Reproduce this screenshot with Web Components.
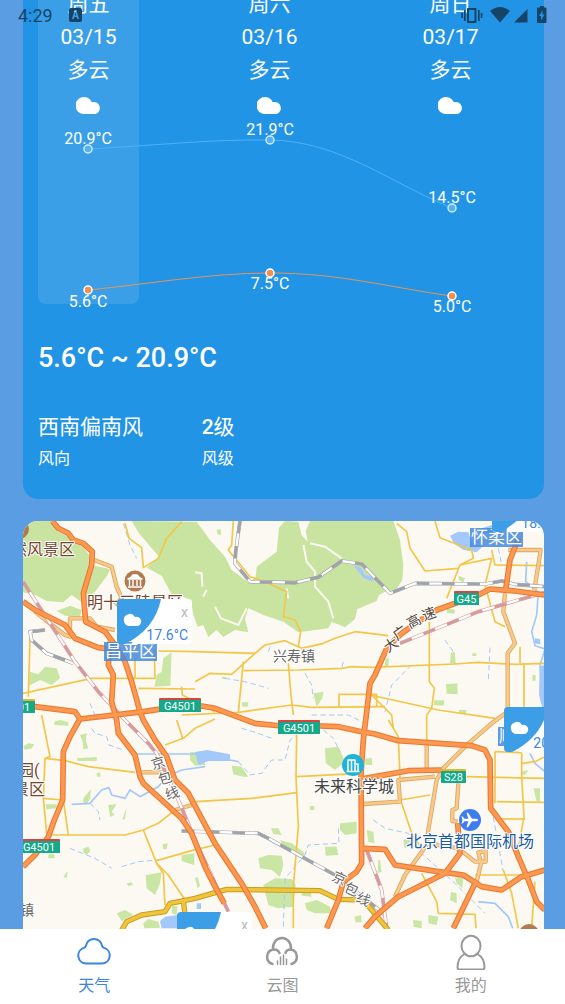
<!DOCTYPE html>
<html lang="zh-CN">
<head>
<meta charset="utf-8">
<meta name="viewport" content="width=device-width, initial-scale=1">
<title>天气</title>
<style>
    html, body {
        margin: 0;
        height: 100%;
    }

    body {
        font-family: Roboto, "Noto Sans CJK SC", sans-serif;
        color: #fff;
        overflow: hidden;
    }
</style>
</head>
<body>
<weather-app></weather-app>

<template id="tpl-app">
<style>
    :host {
        display: flex;
        flex-direction: column;
        height: 100vh;
        background: #5a9de3;
    }

    main {
        flex: 1;
        min-height: 0;
        display: flex;
        flex-direction: column;
        gap: 22px;
        padding: 0 21px 0 23px;
        overflow: hidden;
    }

    /* the page is scrolled part way down the forecast */
    forecast-card {
        margin-top: -27px;
    }
</style>
<status-bar></status-bar>
<main>
    <forecast-card></forecast-card>
    <weather-map>
        <map-place x="447" y="7">怀柔区</map-place>
        <map-place x="81" y="121">昌平区</map-place>
        <map-place x="475" y="206">顺义区</map-place>
        <weather-pin x="469" y="-34">18.2°C</weather-pin>
        <weather-pin x="94" y="78">17.6°C</weather-pin>
        <weather-pin x="481" y="186">20.1°C</weather-pin>
        <weather-pin x="154" y="391">19.5°C</weather-pin>
    </weather-map>
</main>
<tab-bar></tab-bar>
</template>

<template id="tpl-status">
<style>
    :host {
        position: absolute;
        inset: 0 0 auto 0;
        display: flex;
        align-items: center;
        height: 30px;
        padding: 0 18px;
        color: #164468;
        font-size: 18px;
        z-index: 2;
    }

    .badge { margin-left: 16px; }
    .icons { margin-left: auto; }
    svg { display: block; fill: currentColor; }
</style>
<span>4:29</span>
<svg class="badge" width="13" height="14" viewBox="0 0 13 14" aria-hidden="true">
    <path fill-rule="evenodd" d="M2 0h9a2 2 0 0 1 2 2v10a2 2 0 0 1-2 2H2a2 2 0 0 1-2-2V2a2 2 0 0 1 2-2zM5.500 2.500 3 11h1.700l.5-2h2.600l.5 2H10L7.500 2.500zM5.600 7.500l.9-3.200.9 3.200z"/>
</svg>
<svg class="icons" width="86" height="18" viewBox="461 6 86 18" aria-hidden="true">
    <path fill-rule="evenodd" d="M468 8h7.500a1 1 0 0 1 1 1v13a1 1 0 0 1-1 1H468a1 1 0 0 1-1-1V9a1 1 0 0 1 1-1zm1 2v11h5.500V10z"/>
    <path d="M464 10h1.700v11H464zM461.300 13h1.700v5h-1.700zM478 10h1.700v11H478zM480.700 13h1.700v5h-1.700z"/>
    <path d="M490 11q10-8 20 0L500 22.500z"/>
    <path d="M514 22.500 527.500 9v13.500z"/>
    <path fill-rule="evenodd" d="M540 6h4v1.500h1.500a1 1 0 0 1 1 1V22a1 1 0 0 1-1 1h-7.500a1 1 0 0 1-1-1V8.500a1 1 0 0 1 1-1h2zm2.500 4.500-3.500 5.500h2v4.500l3.500-6h-2z"/>
</svg>
</template>

<template id="tpl-forecast">
<style>
    :host {
        display: block;
        padding: 15px 15px 24px;
        border-radius: 0 0 15px 15px;
        background: #2294e5;
    }

    .days {
        display: flex;
        justify-content: space-between;
        margin-right: 28px;
    }

    forecast-day {
        width: 101px;
    }

    .week {
        display: grid;
    }

    /* the columns and the chart share one cell, so the chart runs over them */
    .days, .chart {
        grid-area: 1 / 1;
    }

    .chart {
        align-self: end;
        margin-right: 28px;
    }

    h2 {
        margin: 38px 0 37px;
        font-size: 27px;
        line-height: 32px;
        font-weight: 500;
    }

    dl {
        display: grid;
        grid-template-columns: repeat(3, 1fr);
        margin: 0;
    }

    dl div {
        display: flex;
        flex-direction: column-reverse;
    }

    dt {
        font-size: 16px;
        line-height: 32px;
    }

    dd {
        margin: 0;
        font-size: 21px;
        line-height: 32px;
    }

    b {
        font-weight: 500;
    }
</style>
<section class="week">
    <div class="days">
        <forecast-day active day="周五" date="03/15">多云</forecast-day>
        <forecast-day day="周六" date="03/16">多云</forecast-day>
        <forecast-day day="周日" date="03/17">多云</forecast-day>
    </div>
    <temp-chart class="chart"></temp-chart>
</section>
<h2>5.6°C ~ 20.9°C</h2>
<dl>
    <div><dt>风向</dt><dd>西南偏南风</dd></div>
    <div><dt>风级</dt><dd><b>2</b>级</dd></div>
</dl>
</template>

<template id="tpl-day">
<style>
    :host {
        display: flex;
        flex-direction: column;
        align-items: center;
        padding-bottom: 190px;
        border-radius: 8px;
        font-size: 21px;
        line-height: 33px;
    }

    :host([active]) {
        background: rgba(255, 255, 255, 0.11);
    }

    svg {
        margin-top: 10px;
    }
</style>
<span class="day"></span>
<time></time>
<slot></slot>
<svg width="26" height="17" viewBox="0 0 26 17" fill="#fff" aria-hidden="true">
    <path d="M8.500 17A8.500 8.500 0 1 1 15.800 5.200 6.100 6.100 0 1 1 19.500 17z"/>
</svg>
</template>

<template id="tpl-chart">
<style>
    :host {
        display: block;
    }

    svg {
        display: block;
        width: 100%;
        overflow: visible;
    }

    text {
        font-size: 16px;
        fill: #fff;
        text-anchor: middle;
    }
</style>
<svg viewBox="0 0 463 190">
    <path d="M50 35C111 32 172 25 232 26C302 27 354 70 414 94" fill="none" stroke="#4db1fa"/>
    <path d="M50 176C111 170 172 159 232 159C302 159 354 174 414 182" fill="none" stroke="#e3965c"/>
    <g id="points"></g>
</svg>
</template>

<template id="tpl-map">
<style>
    :host {
        display: block;
        position: relative;
        flex: 1;
        min-height: 0;
        overflow: hidden;
        border-radius: 15px 15px 0 0;
        background: #fcf9f2;
    }

    svg {
        display: block;
        width: 100%;
        height: 100%;
    }

    path {
        fill: none;
        stroke-linejoin: round;
    }

    .label {
        paint-order: stroke;
        stroke: #fff;
        stroke-width: 2px;
        stroke-linejoin: round;
        font-size: 16px;
    }

    .small { font-size: 14px; }
    .scenic { fill: #75452d; }
    .town { fill: #696969; }
    .city { fill: #444; }
    .airport { fill: #175aa8; }
    .road { fill: #4f4438; }

    .shield text {
        fill: #fff;
        font-size: 11px;
        text-anchor: middle;
    }
</style>
<svg viewBox="23 521 521 408" preserveAspectRatio="xMinYMin slice">
    <g id="ground" transform="translate(15 515) scale(0.333333)"></g>
    <g id="shields"></g>
    <g id="icons">
        <circle cx="19" cy="529" r="10" fill="#b17a50"/>
        <circle cx="135" cy="581" r="10.500" fill="#b17a50"/>
        <path d="M128 579q3-1 5-4h4q2 3 5 4zM129.500 580v6M133 580v6M137 580v6M140.500 580v6M128 587h14" style="fill:#fff;stroke:#fff;stroke-width:1.400"/>
        <circle cx="353" cy="765" r="11" fill="#1fb3da"/>
        <path d="M348 771v-11h7v11M351.500 771v-11M358 771v-7h-2M346.500 771.500h13" style="stroke:#fff;stroke-width:1.500"/>
        <circle cx="470" cy="820" r="11" fill="#3d7df0"/>
        <path d="M478 820q0-1.300-2-1.300h-4l-4-6h-1.600l2 6h-4l-1.700-2.200h-1.200l1 3.500-1 3.500h1.200l1.700-2.200h4l-2 6h1.600l4-6h4q2 0 2-1.300z" style="fill:#fff"/>
        <circle cx="529" cy="934" r="10" fill="#b17a50"/>
    </g>
    <text class="label scenic" x="11" y="555">然风景区</text>
    <text class="label scenic" x="87" y="608">明十三陵景区</text>
    <text class="label scenic" x="18" y="776">园(</text>
    <text class="label scenic" x="13" y="795">景区</text>
    <text class="label town small" x="20" y="915">镇</text>
    <text class="label town small" x="273" y="661">兴寿镇</text>
    <text class="label city" x="314" y="792">未来科学城</text>
    <text class="label airport" x="406" y="847">北京首都国际机场</text>
    <text class="label road small" x="388 397 410 424" y="653 641 629 621" rotate="-35 -35 -28 -20">大广高速</text>
    <text class="label town small" x="153 160 167" y="770 785 800" rotate="-18">京包线</text>
    <text class="label town small" x="331 343 355" y="880 891 901" rotate="24">京包线</text>
</svg>
<slot></slot>
</template>

<template id="tpl-place">
<style>
    :host {
        position: absolute;
        padding: 0 1px;
        font-size: 17px;
        line-height: 19px;
        white-space: nowrap;
        background: rgba(68, 137, 220, 0.85);
    }
</style>
<slot></slot>
</template>

<template id="tpl-pin">
<style>
    :host {
        position: absolute;
        box-sizing: border-box;
        display: flex;
        flex-direction: column;
        align-items: flex-end;
        justify-content: space-between;
        width: 75px;
        height: 45px;
        padding: 4px 4px 0 0;
        border-radius: 4px;
        overflow: hidden;
        color: #3c86e0;
        background: linear-gradient(#fff, #fff) right / 60px 100% no-repeat;
        font-size: 14px;
        line-height: 18px;
    }

    svg {
        position: absolute;
        left: 0;
        top: 0;
    }

    button {
        padding: 0;
        border: 0;
        background: none;
        color: #b5b9be;
        font: 14px/18px Roboto, sans-serif;
    }

    span {
        position: relative;
    }
</style>
<svg width="44" height="45" viewBox="0 0 44 45" aria-hidden="true">
    <path fill="#3b9ee6" d="M0 0h44Q38 30 8 45H0z"/>
    <path fill="#fff" d="M13 27a6 6 0 1 1 5-9 4.600 4.600 0 1 1 3 9z"/>
</svg>
<button type="button" aria-label="关闭">x</button>
<span><slot></slot></span>
</template>

<template id="tpl-tabs">
<style>
    :host {
        display: block;
        background: #fff;
    }

    nav {
        display: flex;
    }

    button {
        flex: 1;
        display: flex;
        flex-direction: column;
        align-items: center;
        gap: 4px;
        height: 75px;
        padding: 5px 0 0;
        border: 0;
        background: none;
        color: #999;
        font: 16px/24px Roboto, "Noto Sans CJK SC", sans-serif;
    }

    button[aria-current] {
        color: #3a86e4;
    }

    svg {
        fill: none;
        stroke: currentColor;
        stroke-width: 2;
        stroke-linecap: round;
        stroke-linejoin: round;
    }
</style>
<nav>
    <button type="button" aria-current="page">
        <svg width="36" height="36" viewBox="0 0 36 36"><path d="M10 29.500a8 8 0 0 1-2.200-15.600c.9-.3 1.700-.8 2-2C11 7.300 14.200 5 18 5s7 2.300 8.200 6.900c.3 1.200 1.100 1.700 2 2A8 8 0 0 1 26 29.500z"/></svg>
        天气
    </button>
    <button type="button">
        <svg width="36" height="36" viewBox="0 0 36 36"><path stroke-width="2.500" d="M8.500 30A7.500 7.500 0 0 1 9 15.500c3-.3 5.500 1 6.500 3.500M9 15.500C8.500 9 12.500 4 18 4s9.500 5 9 11.500M21.500 19c.5-2.500 2.500-3.500 5.500-3.500A7.500 7.500 0 0 1 27.500 30"/><path stroke-width="1.500" d="M13.500 30.500V27M16.500 30.500V23M19.500 30.500V21M22.500 30.500V25"/></svg>
        云图
    </button>
    <button type="button">
        <svg width="36" height="36" viewBox="0 0 36 36"><ellipse cx="18" cy="12" rx="9.500" ry="10.300"/><path d="M11.500 20C7 22.500 4.500 27 4.500 33.500q0 2 2 2h23q2 0 2-2C31.500 27 29 22.500 24.500 20"/></svg>
        我的
    </button>
</nav>
</template>

<script>
const SVG = "http://www.w3.org/2000/svg";

function attach(host, id) {
    const root = host.attachShadow({ mode: "open" });
    root.appendChild(document.getElementById(id).content.cloneNode(true));
    return root;
}

function draw(parent, name, attrs, text) {
    const node = document.createElementNS(SVG, name);
    for (const key in attrs) node.setAttribute(key, attrs[key]);
    if (text) node.textContent = text;
    parent.appendChild(node);
    return node;
}

// Map geometry, three units to a pixel. Each string is one shape.
const forests = [
    "24,18 108,18 125,48 155,62 172,82 205,95 222,120 228,150 285,162 278,180 240,230 200,262 170,240 145,262 95,258 60,240 24,232",
    "125,288 165,272 200,285 195,305 150,302",
    "350,18 372,55 402,90 432,125 395,158 440,182 452,205 470,238 505,245 528,256 535,300 548,335 565,330 580,366 605,345 625,366 660,345 700,352 690,312 700,280 725,290 745,300 805,320 850,352 940,340 950,320 990,337 1020,312 1027,282 1085,258 1092,240 1120,225 1135,238 1162,195 1165,150 1155,75 1135,18 885,18 872,48 878,80 860,60 850,20 810,18 792,38 785,110 725,155 722,188 700,202 650,165 630,125 585,75 545,20",
    "605,45 617,42 618,60 608,58",
];

const parks = [
    "45,470 70,478 90,455 125,460 135,490 110,510 75,495 42,512", "445,430 470,412 466,512 418,515 425,480 440,470",
    "895,535 925,530 922,550 905,575", "680,562 700,562 698,575 682,575", "620,485 634,485 632,492 622,492",
    "1308,412 1320,412 1322,448 1305,445", "1293,507 1327,505 1328,538 1295,536", "1258,556 1288,556 1286,572 1256,570",
    "1372,415 1385,415 1384,423 1372,423", "1330,182 1350,190 1345,202 1332,196", "1296,278 1320,285 1318,296 1296,294",
    "1552,480 1562,480 1562,497 1552,497", "1112,430 1122,430 1120,455 1108,455", "1330,585 1355,585 1352,595 1335,595",
    "118,620 135,615 160,622 160,632 118,630", "25,695 40,685 58,688 50,700 30,705", "195,660 215,655 212,675 220,700 205,703 203,680",
    "185,730 245,726 245,738 188,738", "245,775 256,772 256,785 246,785", "92,868 125,868 125,880 95,883",
    "205,850 228,822 225,850 215,870 205,862", "280,870 305,868 290,890 300,900 285,905", "335,875 330,912 322,915 330,890",
    "205,1000 220,995 226,1008 215,1020 205,1012", "392,1080 440,1072 435,1105 420,1140 395,1120", "500,1020 538,1015 538,1050 520,1045 500,1038",
    "100,1018 118,1018 118,1030 100,1030", "443,988 458,985 455,1002 445,1003", "145,1087 155,1070 158,1072 155,1088",
    "335,1105 350,1102 354,1110 340,1113", "305,1195 330,1185 355,1200 320,1218", "385,1225 400,1212 430,1220 435,1238 388,1240",
    "540,1090 548,1085 555,1112 548,1120", "525,712 568,708 570,750 540,752 525,735",
    "730,1030 760,1020 800,1022 805,1050 795,1085 770,1065 735,1060", "745,1110 780,1090 830,1092 842,1110 835,1175 790,1180 760,1170",
    "650,752 680,755 700,785 685,785 655,778", "768,940 790,940 800,960 775,957", "795,975 830,985 870,1015 860,1025 810,1000",
    "975,925 1025,920 1025,955 990,960 975,945", "930,995 965,995 970,1020 932,1022", "885,873 898,873 898,885 885,885",
    "860,1128 885,1120 890,1145 860,1142", "870,1165 905,1155 945,1175 950,1195 900,1195 875,1185", "930,700 970,695 990,740 960,765 932,745",
    "1050,732 1070,728 1072,750 1052,750", "1055,945 1075,950 1078,985 1060,980", "1018,1205 1038,1200 1040,1222 1022,1222",
    "1165,975 1190,965 1192,990 1168,1000", "1320,1088 1345,1085 1342,1120 1325,1105", "1308,1130 1325,1135 1325,1165 1305,1155",
    "1240,1200 1270,1205 1265,1230 1240,1225", "1195,1215 1220,1218 1220,1240 1195,1235", "1555,820 1575,820 1575,860 1565,860",
    "470,1170 488,1175 485,1200 470,1195", "1090,1035 1095,1035 1100,1070 1088,1075", "1520,770 1540,765 1532,778 1522,780",
];

const lakes = [
    "1305,62 1330,50 1360,52 1372,85 1402,95 1385,112 1345,104 1318,86", "1015,150 1040,160 1050,180 1075,185 1072,200 1045,188",
    "1400,40 1430,30 1440,50 1400,56",
    "540,712 575,705 645,718 645,738 580,738 550,750", "435,1218 450,1205 488,1200 488,1240 440,1240",
    "545,1165 558,1165 558,1182 545,1182", "1560,370 1575,372 1576,388 1558,385", "1574,455 1588,450 1588,600 1572,540",
];

const rivers = [
    "1535,140 1532,200 1570,232 1565,300 1550,350 1560,392 1590,402 1575,450 1585,570",
    "365,717 570,717", "170,868 225,865 260,825 282,818 290,840 330,850 345,825 375,845 430,815 455,785 500,765 570,755",
    "1545,715 1560,745 1590,770", "1390,1160 1440,1165 1480,1205 1493,1240", "645,735 670,740",
];

// streams that only show in places
const streams = [
    "225,865 250,890 255,915", "230,640 240,655 275,665 282,690 325,705",
    "670,740 705,780 740,775 770,735 810,735 825,675 845,660", "1075,915 1110,940 1180,955 1220,1015 1320,1105 1410,1195",
    "870,475 890,510 895,550", "925,645 955,670 975,710", "970,940 972,985 880,990 870,1020 810,1090 805,1235",
    "765,395 760,412", "1450,100 1460,150", "1425,398 1420,495", "325,25 345,90 365,130", "165,1000 240,1030 290,1060",
    "320,1055 370,1040 430,1035", "1190,450 1130,510 1110,590", "680,640 730,655 770,670", "1290,375 1315,410", "225,565 240,600",
    "1430,880 1450,990 1465,1070", "630,490 690,500 760,520", "890,600 1000,600 1050,625", "985,440 980,460",
];

const creeks = [
    "885,85 930,95 980,130", "865,90 875,140 900,170 900,215 940,260 955,310", "540,172 560,175 562,215", "600,275 618,310 670,330 695,280",
    "815,220 820,250", "575,225 565,245",
];

const lanes = [
    "655,18 650,90 640,105 660,130 705,185 750,200 815,230 805,305 840,315 857,350 850,395",
    "330,25 342,70 380,98 385,158 430,130 455,70 500,20",
    "540,500 585,475 650,478 720,415 750,390 810,377 860,400 925,385 960,370 1020,350 1120,362",
    "430,408 540,410 720,415", "685,467 850,465 980,460 1010,455 1070,457 1320,447 1390,442 1500,448 1590,445",
    "685,440 670,592", "820,445 828,540 835,600", "845,660 843,785 850,935 835,1115 835,1240",
    "500,600 670,592 830,570 890,577 1110,575", "972,575 972,538 1085,538 1085,575", "1065,540 1120,552 1270,585 1440,610",
    "45,370 40,545", "24,535 230,490 420,490 418,405", "360,430 360,490", "370,520 540,522", "500,515 502,540 600,590",
    "1145,25 1175,50 1185,100 1230,168 1330,160", "1260,18 1275,68 1370,105 1375,130 1335,150 1295,250",
    "1335,150 1430,130 1410,210 1440,320 1470,335", "1243,320 1243,500 1258,520 1250,580 1235,600 1235,690",
    "1515,395 1515,445", "1527,445 1527,590", "1430,105 1440,150 1590,152", "80,600 105,725 90,730 85,850 95,955",
    "90,730 150,737 220,755 360,772", "85,850 145,855 160,960", "100,960 330,960 385,945 430,925 480,885",
    "540,860 710,850 845,833", "385,945 405,995 425,1045 445,1075 450,1170", "425,1045 460,1080 510,1155",
    "425,1037 530,1007 600,990", "450,690 505,670 540,640 600,612", "485,615 503,670",
    "845,785 1037,775", "1155,855 1245,840", "1160,865 1190,955 1220,1000", "1355,785 1590,790",
    "1520,713 1520,785 1527,905 1510,1000", "1445,860 1590,862", "1440,912 1530,912", "1440,710 1520,713",
    "1440,710 1440,865", "1220,1075 1265,1160 1270,1195 1380,1198 1383,1240", "1380,1080 1520,1080",
    "1465,1065 1490,1135 1510,1240", "1120,615 1150,665 1155,790", "1550,1240 1560,1100", "1520,745 1560,740 1590,725",
    "1070,540 1130,600 1135,640",
];

const avenues = [
    "230,132 290,155 305,215 320,250 300,270", "60,290 100,322 150,360 165,365 165,310 225,310 245,335 300,345",
    "1470,235 1465,290 1500,385 1478,415 1478,590 1430,625 1350,695 1285,760 1265,795 1240,945 1235,990 1170,1080 1140,1145",
    "1480,105 1577,105 1558,225", "1045,867 1155,860 1150,795 1260,785", "1235,690 1235,765", "380,772 440,772", "480,885 530,870",
    "1330,805 1325,880 1312,885 1312,918 1328,920", "1240,985 1330,1000 1380,1040 1412,1040 1412,1008 1390,1012 1398,1045 1385,1100",
];

const highways = [
    "112,18 130,40 160,55 175,75 205,85 232,110 230,150 205,235 212,320 270,350 300,390 330,440 350,500 375,590 385,615 420,675 455,725 480,795 520,835 600,985 640,1045 680,1105 720,1175 752,1240",
    "24,260 60,285 150,330 180,370 250,398 285,402", "285,380 280,450 295,480 290,560 305,615 310,655 360,720 375,785 385,805 440,855 500,910 530,955 570,1055 600,1115 628,1165",
    "24,570 60,575 180,590 195,612 385,590 450,580 560,573 600,580 680,610 720,625 800,633 920,633 970,635 1040,650 1080,657 1150,677 1370,692 1410,705 1425,735 1427,880 1480,950 1510,1025 1540,1095 1565,1160 1590,1185",
    "195,612 165,665 145,710 143,855 118,915 100,965 60,1020 24,1055",
    "1590,240 1500,228 1425,222 1390,240 1265,285 1210,320 1160,355 1115,400 1080,480 1065,505 1045,675 1038,775 1040,1045 1025,1070 985,1100 970,1155 935,1240",
    "1510,70 1485,135 1472,225", "1038,792 1080,785 1180,767 1280,765",
    "1040,1000 1110,1003 1140,1050 1270,1070 1345,1080 1400,1115 1460,1125 1520,1085 1590,1065",
    "1328,925 1335,1015 1290,1075 1150,1145 1080,1205 1050,1240", "1385,1095 1315,1240",
];

const ringRoads = [
    "320,1245 335,1220 380,1200 450,1190 465,1165 540,1150 635,1123 915,1127 970,1153 1045,1155 1120,1245",
    "505,1155 510,1200",
];

const railways = [
    "675,18 662,110 660,145 705,200 840,203 910,187 980,138 1040,147 1125,235 1200,205 1410,207 1460,198 1500,208 1590,215",
    "90,345 45,350 50,375 95,415 175,445", "500,948 730,955 760,970 960,1080 1080,1175 1110,1200",
];

const fastRailways = [
    "24,200 180,440 250,530 330,615 400,685 425,715 490,855 540,975 640,1190",
    "1155,385 1390,290 1590,232", "1055,1005 1100,1125 1115,1240",
];

const points = [
    { x: 50, y: 35, label: 30, text: "20.9°C" },
    { x: 232, y: 26, label: 21, text: "21.9°C" },
    { x: 414, y: 94, label: 89, text: "14.5°C" },
    { x: 50, y: 176, label: 193, text: "5.6°C", low: true },
    { x: 232, y: 159, label: 175, text: "7.5°C", low: true },
    { x: 414, y: 182, label: 198, text: "5.0°C", low: true },
];

const shields = [
    { x: 159, y: 699, w: 42, text: "G4501", top: "#d9453d" },
    { x: 278, y: 721, w: 42, text: "G4501", top: "#d9453d" },
    { x: 18, y: 840, w: 42, text: "G4501", top: "#d9453d" },
    { x: -7, y: 700, w: 42, text: "G4501", top: "#e8b42c" },
    { x: 454, y: 592, w: 25, text: "G45", top: "#d9453d" },
    { x: 441, y: 770, w: 25, text: "S28", top: "#e8b42c" },
];

class TempChart extends HTMLElement {
    connectedCallback() {
        const group = attach(this, "tpl-chart").querySelector("#points");
        points.forEach((p) => {
            draw(group, "circle", {
                cx: p.x, cy: p.y, r: 4,
                fill: p.low ? "#f0904e" : "#52b2f8",
                stroke: p.low ? "#fff" : "#d3ecfd",
                "stroke-width": 1.5,
            });
            draw(group, "text", { x: p.x, y: p.label }, p.text);
        });
    }
}

class ForecastDay extends HTMLElement {
    connectedCallback() {
        const root = attach(this, "tpl-day");
        root.querySelector(".day").textContent = this.getAttribute("day");
        root.querySelector("time").textContent = this.getAttribute("date");
    }
}

class WeatherMap extends HTMLElement {
    connectedCallback() {
        const root = attach(this, "tpl-map");
        this.ground = root.querySelector("#ground");

        this.areas(forests, "#c9e4a0");
        this.areas(parks, "#c9e6a4");
        this.areas(lakes, "#a3c8fb");
        this.lines(rivers, "#a3c8fb", 5);
        this.lines(streams, "#a3c8fb", 3, "16 10");
        this.lines(creeks, "#fcf9f2", 6);
        this.lines(lanes, "#f2c649", 5);
        this.cased(avenues, "#dba765", "#f8c989", 13, 8);
        this.rails(railways, "#a0a3a9");
        this.rails(fastRailways, "#d59a9e");
        this.cased(ringRoads, "#c89d25", "#f0c53c", 16, 10);
        this.cased(highways, "#e8762f", "#fc9850", 17, 11);

        shields.forEach((s) => this.shield(root.querySelector("#shields"), s));
    }

    areas(list, fill) {
        list.forEach((pts) => draw(this.ground, "polygon", { points: pts, fill }));
    }

    lines(list, stroke, width, dash) {
        list.forEach((pts) => draw(this.ground, "polyline", {
            points: pts, fill: "none", stroke,
            "stroke-width": width,
            "stroke-linejoin": "round",
            "stroke-dasharray": dash || "none",
        }));
    }

    cased(list, edge, fill, outer, inner) {
        this.lines(list, edge, outer);
        this.lines(list, fill, inner);
    }

    rails(list, color) {
        this.lines(list, color, 11);
        this.lines(list, "#fff", 7);
        this.lines(list, color, 9, "38 38");
    }

    shield(parent, s) {
        const g = draw(parent, "g", { class: "shield" });
        draw(g, "rect", { x: s.x, y: s.y - 1, width: s.w, height: 14, rx: 1, fill: s.top });
        draw(g, "rect", { x: s.x, y: s.y + 1, width: s.w, height: 12, rx: 1, fill: "#14a98b" });
        draw(g, "text", { x: s.x + s.w / 2, y: s.y + 11 }, s.text);
    }
}

// Anything that is pinned to a spot on the map
class MapItem extends HTMLElement {
    connectedCallback() {
        attach(this, this.constructor.template);
        this.style.left = this.getAttribute("x") + "px";
        this.style.top = this.getAttribute("y") + "px";
    }
}

class MapPlace extends MapItem {
    static template = "tpl-place";
}

class WeatherPin extends MapItem {
    static template = "tpl-pin";
}

class StatusBar extends HTMLElement {
    connectedCallback() {
        attach(this, "tpl-status");
    }
}

class ForecastCard extends HTMLElement {
    connectedCallback() {
        attach(this, "tpl-forecast");
    }
}

class TabBar extends HTMLElement {
    connectedCallback() {
        const buttons = attach(this, "tpl-tabs").querySelectorAll("button");
        buttons.forEach((button) => button.addEventListener("click", () => {
            buttons.forEach((b) => b.removeAttribute("aria-current"));
            button.setAttribute("aria-current", "page");
        }));
    }
}

class WeatherApp extends HTMLElement {
    connectedCallback() {
        attach(this, "tpl-app");
    }
}

customElements.define("temp-chart", TempChart);
customElements.define("forecast-day", ForecastDay);
customElements.define("weather-map", WeatherMap);
customElements.define("map-place", MapPlace);
customElements.define("weather-pin", WeatherPin);
customElements.define("status-bar", StatusBar);
customElements.define("forecast-card", ForecastCard);
customElements.define("tab-bar", TabBar);
customElements.define("weather-app", WeatherApp);
</script>
</body>
</html>
